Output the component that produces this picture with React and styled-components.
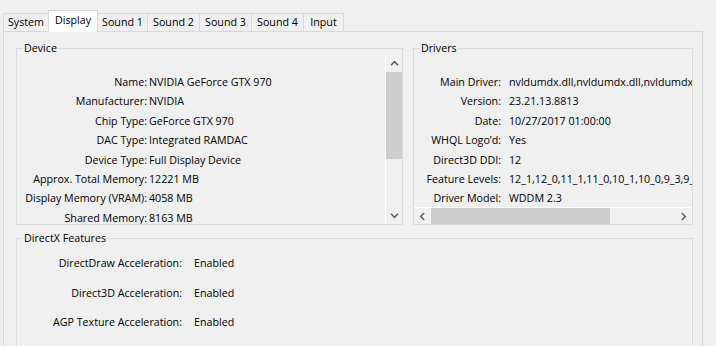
import React from 'react';
import styled, {createGlobalStyle} from 'styled-components';

const Global = createGlobalStyle`
    html, body {
        margin: 0;
        background: #f0f0f0;
    }
    * {
        box-sizing: border-box;
    }
`;

const tabs = [
    {label: 'System', w: 46},
    {label: 'Display', w: 50, active: true},
    {label: 'Sound 1', w: 51},
    {label: 'Sound 2', w: 53},
    {label: 'Sound 3', w: 53},
    {label: 'Sound 4', w: 53},
    {label: 'Input', w: 41},
];

const deviceRows = [
    ['Name', 'NVIDIA GeForce GTX 970'],
    ['Manufacturer', 'NVIDIA'],
    ['Chip Type', 'GeForce GTX 970'],
    ['DAC Type', 'Integrated RAMDAC'],
    ['Device Type', 'Full Display Device'],
    ['Approx. Total Memory', '12221 MB'],
    ['Display Memory (VRAM)', '4058 MB'],
    ['Shared Memory', '8163 MB'],
];

const driverRows = [
    ['Main Driver', 'nvldumdx.dll,nvldumdx.dll,nvldumdx.dll,nvldumdx.dll'],
    ['Version', '23.21.13.8813'],
    ['Date', '10/27/2017 01:00:00'],
    ['WHQL Logo\u2019d', 'Yes'],
    ['Direct3D DDI', '12'],
    ['Feature Levels', '12_1,12_0,11_1,11_0,10_1,10_0,9_3,9_2,9_1'],
    ['Driver Model', 'WDDM 2.3'],
];

const features = [
    ['DirectDraw Acceleration', 'Enabled'],
    ['Direct3D Acceleration', 'Enabled'],
    ['AGP Texture Acceleration', 'Enabled'],
];

const Window = styled.div`
    width: 716px;
    height: 346px;
    overflow: hidden;
    padding: 10px 0 0 3px;
    font-family: 'Open Sans', 'Noto Sans', sans-serif;
    font-size: 10.7px;
    color: #000;
`;

const TabStrip = styled.div`
    display: flex;
    align-items: flex-end;
    height: 21px;
`;

const Tab = styled.div`
    position: relative;
    width: ${p => p.$w}px;
    height: ${p => p.$active ? 22 : 18}px;
    margin-right: -1px;
    margin-bottom: ${p => p.$active ? -1 : 0}px;
    z-index: ${p => p.$active ? 2 : 1};
    border: 1px solid #d9d9d9;
    border-bottom: none;
    background: ${p => p.$active ? '#fff' : '#f0f0f0'};
    text-align: center;
    line-height: ${p => p.$active ? 18 : 16}px;
    white-space: nowrap;
`;

const Panel = styled.div`
    width: 700px;
    height: 340px;
    border: 1px solid #d9d9d9;
    background: #f0f0f0;
    padding: 9px 9px 0 12px;
    display: flex;
    flex-direction: column;
    gap: 6px;
`;

const TopRow = styled.div`
    display: flex;
    gap: 10px;
`;

const Group = styled.fieldset`
    margin: 0;
    padding: 0;
    min-width: 0;
    width: ${p => p.$w}px;
    ${p => p.$fill && 'flex: 1;'}
    border: 1px solid #dcdcdc;
`;

const Legend = styled.legend`
    margin-left: 6px;
    padding: 0 1px;
    line-height: 14px;
`;

const VScroll = styled.div`
    height: 169px;
    display: grid;
    grid-template-columns: 1fr 17px;
`;

const HScroll = styled.div`
    height: 169px;
    display: grid;
    grid-template-rows: 1fr 17px;
    overflow: hidden;
`;

const Rows = styled.div`
    padding-top: ${p => p.$top}px;
    display: grid;
    grid-template-columns: ${p => p.$label}px auto;
    grid-auto-rows: ${p => p.$line}px;
    column-gap: ${p => p.$gap}px;
    row-gap: ${p => p.$rowGap || 0}px;
    align-content: start;
    line-height: ${p => p.$line}px;
    overflow: hidden;
    white-space: nowrap;
`;

const Label = styled.div`
    text-align: right;
`;

const Value = styled.div``;

const VBar = styled.div`
    display: flex;
    flex-direction: column;
    background: #f0f0f0;
    border-left: 1px solid #fff;
`;

const HBar = styled.div`
    display: flex;
    background: #f0f0f0;
    border-top: 1px solid #fff;
`;

const Arrow = styled.div`
    flex: none;
    width: ${p => p.$vertical ? 16 : 17}px;
    height: ${p => p.$vertical ? 17 : 16}px;
    display: flex;
    align-items: center;
    justify-content: center;
`;

const Track = styled.div`
    flex: 1;
    display: flex;
    flex-direction: ${p => p.$vertical ? 'column' : 'row'};
`;

const Thumb = styled.div`
    background: #cdcdcd;
    ${p => p.$vertical ? `height: ${p.$size}px;` : `width: ${p.$size}px;`}
`;

const Chevron = ({dir}) => {
    const rot = {up: 0, down: 180, left: 270, right: 90}[dir];
    return (
        <svg width="9" height="9" viewBox="0 0 9 9" style={{transform: `rotate(${rot}deg)`}}>
            <path d="M1 6.2 L4.5 2.7 L8 6.2" fill="none" stroke="#606060" strokeWidth="1.6" />
        </svg>
    );
};

const RowList = ({rows}) => rows.map(([k, v]) => (
    <React.Fragment key={k}>
        <Label>{k}:</Label>
        <Value>{v}</Value>
    </React.Fragment>
));

function App() {
    return (
        <Window>
            <Global />
            <TabStrip>
                {tabs.map(t => (
                    <Tab key={t.label} $w={t.w} $active={t.active}>{t.label}</Tab>
                ))}
            </TabStrip>
            <Panel>
                <TopRow>
                    <Group $w={387}>
                        <Legend>Device</Legend>
                        <VScroll>
                            <Rows $top={18} $label={130} $gap={2} $line={19.4}>
                                <RowList rows={deviceRows} />
                            </Rows>
                            <VBar>
                                <Arrow $vertical><Chevron dir="up" /></Arrow>
                                <Track $vertical>
                                    <Thumb $vertical $size={87} />
                                </Track>
                                <Arrow $vertical><Chevron dir="down" /></Arrow>
                            </VBar>
                        </VScroll>
                    </Group>
                    <Group $w={280}>
                        <Legend>Drivers</Legend>
                        <HScroll>
                            <Rows $top={18} $label={87} $gap={8} $line={19.4}>
                                <RowList rows={driverRows} />
                            </Rows>
                            <HBar>
                                <Arrow><Chevron dir="left" /></Arrow>
                                <Track>
                                    <Thumb $size={179} />
                                </Track>
                                <Arrow><Chevron dir="right" /></Arrow>
                            </HBar>
                        </HScroll>
                    </Group>
                </TopRow>
                <Group $w={677} $fill>
                    <Legend>DirectX Features</Legend>
                    <Rows $top={9} $label={165} $gap={12} $line={19} $rowGap={10.5}>
                        <RowList rows={features} />
                    </Rows>
                </Group>
            </Panel>
        </Window>
    );
}

export default App;
